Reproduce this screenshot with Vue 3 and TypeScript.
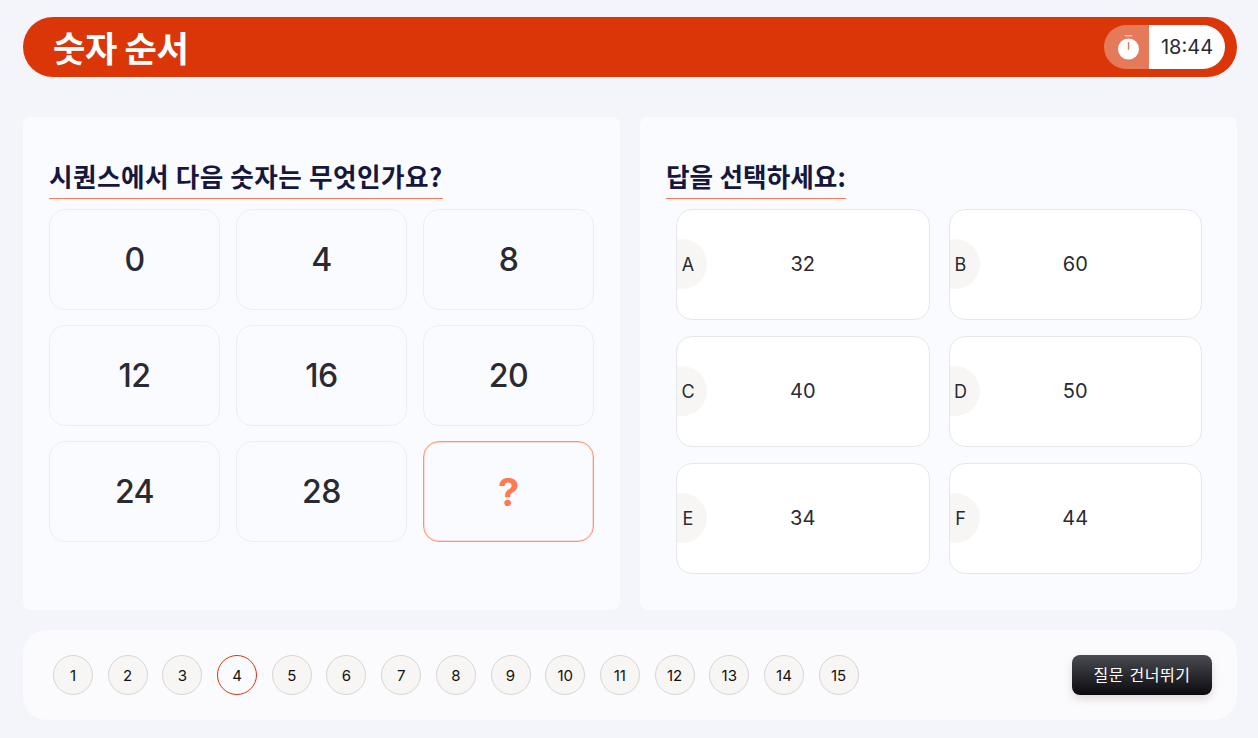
<template>
  <div class="page">
    <header class="top-bar">
      <h1>숫자 순서</h1>
      <div class="timer">
        <span class="timer-icon">
          <svg width="24" height="26" viewBox="0 0 24 26">
            <rect x="9.5" y="1" width="8" height="1.6" rx="0.8" fill="#f7c4b2" />
            <circle cx="13.5" cy="15" r="10.5" fill="#fff" />
            <rect x="12.8" y="8" width="1.4" height="8" rx="0.7" fill="#e57a5a" />
          </svg>
        </span>
        <span class="timer-value">18:44</span>
      </div>
    </header>

    <main class="panels">
      <section class="panel">
        <h2>시퀀스에서 다음 숫자는 무엇인가요?</h2>
        <div class="sequence">
          <div
            v-for="item in sequence"
            :key="item"
            class="cell"
            :class="{ unknown: item === '?' }"
          >
            {{ item }}
          </div>
        </div>
      </section>

      <section class="panel">
        <h2 class="answer-title">답을 선택하세요:</h2>
        <div class="options">
          <button v-for="opt in options" :key="opt.label" class="option" type="button">
            <span class="option-label">{{ opt.label }}</span>
            {{ opt.value }}
          </button>
        </div>
      </section>
    </main>

    <footer class="bottom-bar">
      <div class="pager">
        <button
          v-for="n in 15"
          :key="n"
          class="page-dot"
          :class="{ current: n === current }"
          type="button"
        >
          {{ n }}
        </button>
      </div>
      <button class="skip" type="button">질문 건너뛰기</button>
    </footer>
  </div>
</template>

<script setup lang="ts">
import { ref } from 'vue';

const current = ref(4);

const sequence: string[] = ['0', '4', '8', '12', '16', '20', '24', '28', '?'];

const options = [
  { label: 'A', value: 32 },
  { label: 'B', value: 60 },
  { label: 'C', value: 40 },
  { label: 'D', value: 50 },
  { label: 'E', value: 34 },
  { label: 'F', value: 44 },
];
</script>

<style>
html,
body {
  background: #f4f5fa;
}
</style>

<style scoped>
.page {
  display: flex;
  flex-direction: column;
  height: 738px;
  box-sizing: border-box;
  padding: 17px 21px 18px 23px;
  font-family: Inter, 'Noto Sans CJK KR', sans-serif;
  background: #f4f5fa;
}

.top-bar {
  display: flex;
  align-items: center;
  justify-content: space-between;
  height: 60px;
  padding: 0 12px 0 30px;
  border-radius: 30px;
  background: #db3608;
}

h1 {
  margin: 0 0 2px;
  color: #fff;
  font-size: 35.2px;
  letter-spacing: -0.38px;
  font-weight: 700;
  font-family: 'Noto Sans CJK KR', sans-serif;
}

.timer {
  display: flex;
  height: 44px;
  border-radius: 22px;
  overflow: hidden;
}

.timer-icon {
  display: flex;
  align-items: center;
  justify-content: center;
  width: 45px;
  background: #e57a5a;
}

.timer-value {
  display: flex;
  align-items: center;
  justify-content: center;
  width: 76px;
  background: #fff;
  color: #2a2a33;
  font-size: 20px;
}

.panels {
  display: grid;
  grid-template-columns: 597px 597px;
  gap: 20px;
  margin-top: 40px;
  height: 493px;
}

.panel {
  padding: 40px 26px 0;
  border-radius: 8px;
  background: #fafbfe;
}

h2 {
  display: table;
  margin: 0 0 10px;
  padding-bottom: 3px;
  border-bottom: 1px solid #ff7a50;
  color: #15173d;
  font-size: 25.6px;
  letter-spacing: 0.45px;
  word-spacing: 0.4px;
  line-height: 38px;
  font-weight: 700;
  font-family: 'Noto Sans CJK KR', sans-serif;
}

.answer-title {
  letter-spacing: 0.05px;
}

.sequence {
  display: grid;
  grid-template-columns: repeat(3, 171px);
  grid-auto-rows: 101px;
  gap: 15px 16px;
}

.cell {
  display: flex;
  align-items: center;
  justify-content: center;
  border: 1px solid #eceef2;
  border-radius: 16px;
  color: #2a2a33;
  font-size: 32px;
  font-weight: 550;
  letter-spacing: -0.5px;
}

.cell.unknown {
  border-color: #ff9370;
  box-shadow: inset 0 0 0 1px rgba(255, 150, 120, 0.3);
  color: #ff7a50;
  font-size: 38px;
  font-weight: 700;
}

.options {
  display: grid;
  grid-template-columns: repeat(2, 253.5px);
  grid-auto-rows: 111px;
  gap: 16px 19px;
  padding-left: 10px;
}

.option {
  position: relative;
  overflow: hidden;
  padding: 0 0 2px;
  border: 1px solid #e6e7eb;
  border-radius: 16px;
  background: #fff;
  color: #2a2a33;
  font-family: inherit;
  font-size: 20px;
}

.option-label {
  position: absolute;
  top: 29px;
  left: -20px;
  display: flex;
  align-items: center;
  justify-content: center;
  width: 50px;
  height: 50px;
  padding-left: 12px;
  box-sizing: border-box;
  border-radius: 50%;
  background: #f7f6f4;
  font-size: 18px;
}

.bottom-bar {
  display: flex;
  align-items: center;
  justify-content: space-between;
  height: 90px;
  margin-top: 20px;
  padding: 0 25px 0 30px;
  border-radius: 24px;
  background: #fbfbfe;
}

.pager {
  display: flex;
  gap: 14.7px;
}

.page-dot {
  width: 40px;
  height: 40px;
  padding: 0;
  border: 1px solid #d6d6d4;
  border-radius: 50%;
  background: #f7f6f4;
  color: #111;
  font-family: inherit;
  font-size: 15px;
}

.page-dot.current {
  border-color: #db3608;
  background: #fafbfe;
}

.skip {
  width: 140px;
  height: 40px;
  padding: 0 0 3px;
  border: 0;
  border-radius: 8px;
  background: linear-gradient(#4a4a52, #0a0a0e);
  box-shadow: 0 4px 10px rgba(120, 80, 60, 0.2);
  color: #fff;
  font-family: 'Noto Sans CJK KR', sans-serif;
  font-size: 16px;
  letter-spacing: 0.5px;
  word-spacing: 1.5px;
}
</style>
